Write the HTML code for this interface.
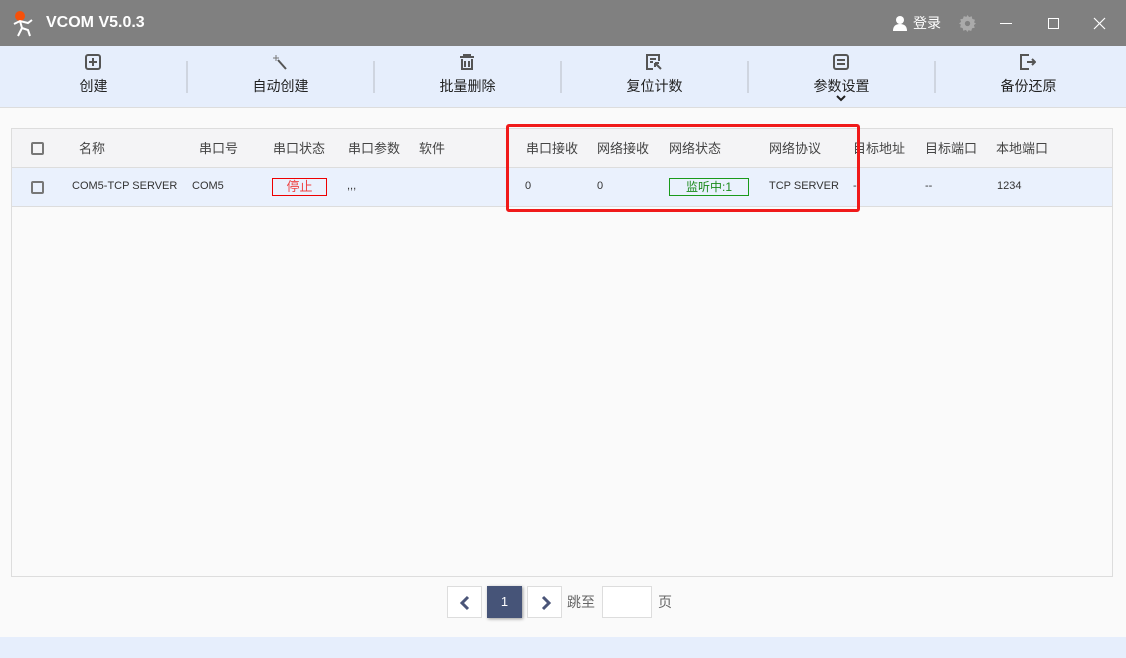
<!DOCTYPE html><html><head><meta charset="utf-8"><style>
*{margin:0;padding:0;box-sizing:border-box}
body{width:1126px;height:658px;background:#fafafa;font-family:"Liberation Sans","Noto Sans CJK SC",sans-serif;position:relative;overflow:hidden;color:#333}
.title{position:absolute;left:0;top:0;width:1126px;height:46px;background:#808080;color:#fff}
.tb{position:absolute;left:0;top:46px;width:1126px;height:62px;background:#e6eefc;border-bottom:1px solid #ddd}
.btn{position:absolute;top:0;width:187px;height:62px;text-align:center;font-size:14px;color:#222}
.btn svg{position:absolute;top:8px;left:85px}
.btn span{position:absolute;top:30px;left:0;width:100%}
.sep{position:absolute;top:15px;width:2px;height:32px;background:#cfd5e0}
.a{position:absolute;font-size:13px}
.tbl{position:absolute;left:11px;top:128px;width:1102px;height:449px;border:1px solid #ddd;background:#fafafa}
.cb{position:absolute;width:13px;height:13px;border:2px solid #777;border-radius:2px}
</style></head><body>
<div class="title">
<svg style="position:absolute;left:10px;top:10px" width="28" height="28" viewBox="0 0 28 28"><circle cx="10" cy="6" r="5" fill="#f5500a"/><path d="M4 14 L10 11 L18 13 L22 10 M10 11 L12 18 L8 26 M12 18 L18 20 L20 26" stroke="#fff" stroke-width="2" fill="none"/></svg>
<div class="a" style="left:46px;top:14px;font-size:16px;font-weight:bold;color:#fff">VCOM V5.0.3</div>
<svg style="position:absolute;left:892px;top:15px" width="16" height="16"><circle cx="8" cy="5" r="4" fill="#fff"/><path d="M1 16 Q1 9 8 9 Q15 9 15 16Z" fill="#fff"/></svg>
<div class="a" style="left:913px;top:13px;font-size:14px;color:#fff">登录</div>
<svg style="position:absolute;left:959px;top:15px" width="17" height="17" viewBox="0 0 16 16"><path d="M8 0l1.5 2 2.5-.8.5 2.5 2.5.8-.8 2.5L16 8l-2 1.5.8 2.5-2.5.5-.8 2.5-2.5-.8L8 16l-1.5-2-2.5.8-.5-2.5-2.5-.8.8-2.5L0 8l2-1.5-.8-2.5 2.5-.5.8-2.5 2.5.8z" fill="#aaa"/><circle cx="8" cy="8" r="2.5" fill="#808080"/></svg>
<div style="position:absolute;left:1000px;top:23px;width:12px;height:1px;background:#fff"></div>
<div style="position:absolute;left:1048px;top:18px;width:11px;height:11px;border:1px solid #fff"></div>
<svg style="position:absolute;left:1093px;top:17px" width="13" height="13"><path d="M1 1l11 11M12 1L1 12" stroke="#fff" stroke-width="1.2"/></svg>
</div>
<div class="tb">
<div class="btn" style="left:0"><svg width="16" height="16"><rect x="1" y="1" width="14" height="14" rx="2" stroke="#555" stroke-width="2" fill="none"/><path d="M8 4v8M4 8h8" stroke="#555" stroke-width="2"/></svg><span>创建</span></div>
<div class="sep" style="left:186px"></div>
<div class="btn" style="left:187px"><svg width="16" height="16"><path d="M6 6 L14 15" stroke="#555" stroke-width="2"/><path d="M4 1v6M1 4h6" stroke="#777"/></svg><span>自动创建</span></div>
<div class="sep" style="left:373px"></div>
<div class="btn" style="left:374px"><svg width="16" height="16"><path d="M1 3h14M5 3V1h6v2M3 5v10h10V5M6 7v6M10 7v6" stroke="#555" stroke-width="2" fill="none"/></svg><span>批量删除</span></div>
<div class="sep" style="left:560px"></div>
<div class="btn" style="left:561px"><svg width="16" height="16"><path d="M7 15H1V1h12v6M4 5h6M4 8h3M15 15L9 9M9 9v4M9 9h4" stroke="#555" stroke-width="2" fill="none"/></svg><span>复位计数</span></div>
<div class="sep" style="left:747px"></div>
<div class="btn" style="left:748px"><svg width="16" height="16"><rect x="1" y="1" width="14" height="14" rx="2" stroke="#555" stroke-width="2" fill="none"/><path d="M4 6h8M4 10h8" stroke="#555" stroke-width="2"/></svg><span>参数设置</span><svg style="top:49px;left:88px" width="10" height="7"><path d="M1 1l4 4 4-4" stroke="#222" stroke-width="2" fill="none"/></svg></div>
<div class="sep" style="left:934px"></div>
<div class="btn" style="left:935px"><svg width="16" height="16"><path d="M9 1H1v14h8M7 8h8M12 5l3 3-3 3" stroke="#555" stroke-width="2" fill="none"/></svg><span>备份还原</span></div>
</div>
<div class="tbl">
<div style="position:absolute;left:0;top:0;width:1100px;height:39px;background:#f4f4f6;border-bottom:1px solid #ddd"></div>
<div style="position:absolute;left:0;top:39px;width:1100px;height:39px;background:#eaf1fd;border-bottom:1px solid #ddd"></div>
<div class="cb" style="left:19px;top:13px"></div><div class="cb" style="left:19px;top:52px"></div>
</div>
<div style="font-size:13px;color:#444">
<div class="a" style="left:79px;top:138px">名称</div><div class="a" style="left:199px;top:138px">串口号</div><div class="a" style="left:273px;top:138px">串口状态</div><div class="a" style="left:348px;top:138px">串口参数</div><div class="a" style="left:419px;top:138px">软件</div><div class="a" style="left:526px;top:138px">串口接收</div><div class="a" style="left:597px;top:138px">网络接收</div><div class="a" style="left:669px;top:138px">网络状态</div><div class="a" style="left:769px;top:138px">网络协议</div><div class="a" style="left:853px;top:138px">目标地址</div><div class="a" style="left:925px;top:138px">目标端口</div><div class="a" style="left:996px;top:138px">本地端口</div>
</div>
<div style="font-size:11px;color:#333">
<div class="a" style="left:72px;top:180px;font-size:11px">COM5-TCP SERVER</div><div class="a" style="left:192px;top:180px;font-size:11px">COM5</div>
<div class="a" style="left:272px;top:178px;width:55px;height:18px;border:1px solid #e00;color:#e44;text-align:center;font-size:13px;line-height:16px">停止</div>
<div class="a" style="left:347px;top:180px;font-size:11px">,,,</div>
<div class="a" style="left:525px;top:180px;font-size:11px">0</div><div class="a" style="left:597px;top:180px;font-size:11px">0</div>
<div class="a" style="left:669px;top:178px;width:80px;height:18px;border:1px solid #1a9a1a;color:#1a8a1a;text-align:center;font-size:12px;line-height:16px">监听中:1</div>
<div class="a" style="left:769px;top:180px;font-size:11px">TCP SERVER</div><div class="a" style="left:853px;top:180px;font-size:11px">--</div><div class="a" style="left:925px;top:180px;font-size:11px">--</div><div class="a" style="left:997px;top:180px;font-size:11px">1234</div>
</div>
<div style="position:absolute;left:506px;top:124px;width:354px;height:88px;border:3px solid #f01a1a;border-radius:3px"></div>
<div style="position:absolute;left:447px;top:586px;width:35px;height:32px;border:1px solid #ddd;background:#fff"><svg style="position:absolute;left:11px;top:8px" width="12" height="16"><path d="M9 2L3 8l6 6" stroke="#4a5578" stroke-width="3" fill="none"/></svg></div>
<div style="position:absolute;left:487px;top:586px;width:35px;height:32px;background:#465478;color:#fff;font-size:13px;text-align:center;line-height:32px;box-shadow:1px 1px 3px #999">1</div>
<div style="position:absolute;left:527px;top:586px;width:35px;height:32px;border:1px solid #ddd;background:#fff"><svg style="position:absolute;left:12px;top:8px" width="12" height="16"><path d="M3 2l6 6-6 6" stroke="#4a5578" stroke-width="3" fill="none"/></svg></div>
<div class="a" style="left:567px;top:592px;font-size:14px;color:#666">跳至</div>
<div style="position:absolute;left:602px;top:586px;width:50px;height:32px;border:1px solid #ddd;background:#fff"></div>
<div class="a" style="left:658px;top:592px;font-size:14px;color:#666">页</div>
<div style="position:absolute;left:0;top:637px;width:1126px;height:21px;background:#e6eefc"></div>
</body></html>
